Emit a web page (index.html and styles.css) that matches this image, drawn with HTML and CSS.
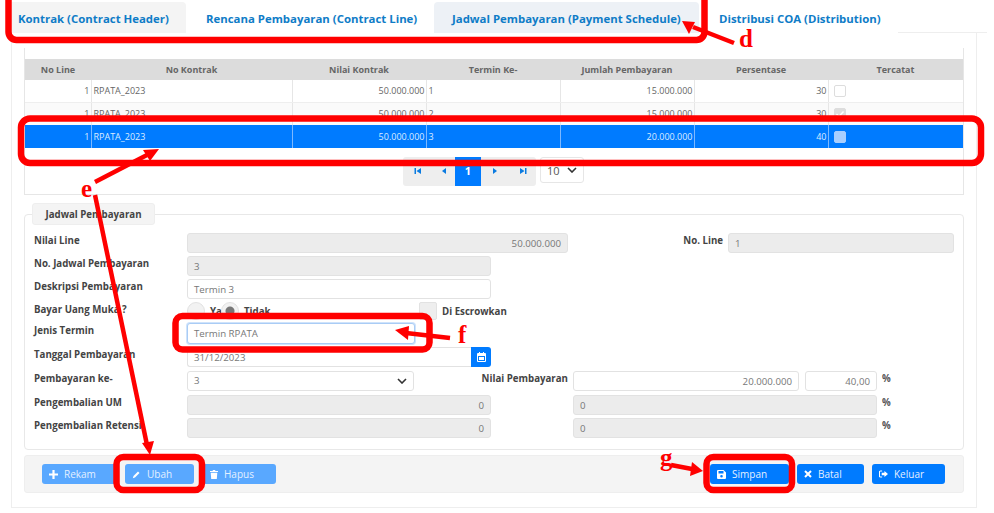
FILE: index.html
```html
<!DOCTYPE html>
<html lang="id">
<head>
  <meta charset="UTF-8" />
  <title>Jadwal Pembayaran</title>
  <link rel="stylesheet" href="styles.css">
</head>
<body>
  <div class="tabs">
    <a class="tab tab-grey">Kontrak (Contract Header)</a>
    <a class="tab tab-plain">Rencana Pembayaran (Contract Line)</a>
    <a class="tab tab-active">Jadwal Pembayaran (Payment Schedule)</a>
    <a class="tab tab-last">Distribusi COA (Distribution)</a>
  </div>

  <div class="panel">
    <div class="grid-box">
      <table class="grid">
        <colgroup>
          <col class="c1"><col class="c2"><col class="c3"><col class="c4"><col class="c5"><col class="c6"><col class="c7">
        </colgroup>
        <thead>
          <tr><th>No Line</th><th>No Kontrak</th><th>Nilai Kontrak</th><th>Termin Ke-</th><th>Jumlah Pembayaran</th><th>Persentase</th><th>Tercatat</th></tr>
        </thead>
        <tbody>
          <tr class="r1">
            <td class="num">1</td><td>RPATA_2023</td><td class="num">50.000.000</td><td>1</td><td class="num">15.000.000</td><td class="num">30</td><td><span class="check"></span></td>
          </tr>
          <tr class="r2">
            <td class="num">1</td><td>RPATA_2023</td><td class="num">50.000.000</td><td>2</td><td class="num">15.000.000</td><td class="num">30</td><td><span class="check checked"><svg width="10" height="10" viewBox="0 0 10 10"><path d="M1.500 5l2.500 2.500 4.500-5" fill="none" stroke="#fff" stroke-width="1.500"/></svg></span></td>
          </tr>
          <tr class="selected">
            <td class="num">1</td><td>RPATA_2023</td><td class="num">50.000.000</td><td>3</td><td class="num">20.000.000</td><td class="num">40</td><td><span class="check"></span></td>
          </tr>
        </tbody>
      </table>
      <div class="pager-row">
        <div class="pager">
          <span class="pg pg-a"><svg width="8" height="8" viewBox="0 0 8 8"><path d="M0.500 1h1.500v6H0.500zM7 1v6L2.500 4z"/></svg></span>
          <span class="pg pg-b"><svg width="8" height="8" viewBox="0 0 8 8"><path d="M6 1v6L2 4z"/></svg></span>
          <span class="pg pg-on">1</span>
          <span class="pg pg-c"><svg width="8" height="8" viewBox="0 0 8 8"><path d="M2 1v6l4-3z"/></svg></span>
          <span class="pg pg-d"><svg width="8" height="8" viewBox="0 0 8 8"><path d="M1 1v6l4.500-3zM6 1h1.500v6H6z"/></svg></span>
        </div>
        <div class="page-size">10
          <svg width="10" height="6" viewBox="0 0 10 6"><path d="M1 1l4 4 4-4" fill="none" stroke="#333" stroke-width="1.600"/></svg>
        </div>
      </div>
    </div>

    <div class="fieldset">
      <div class="legend">Jadwal Pembayaran</div>
      <div class="row">
        <label class="lbl">Nilai Line</label>
        <div class="inp off right w381">50.000.000</div>
        <label class="lbl-r w155">No. Line</label>
        <div class="inp off w226 ml5">1</div>
      </div>
      <div class="row">
        <label class="lbl">No. Jadwal Pembayaran</label>
        <div class="inp off w304">3</div>
      </div>
      <div class="row">
        <label class="lbl">Deskripsi Pembayaran</label>
        <div class="inp w304">Termin 3</div>
      </div>
      <div class="row row-radio">
        <label class="lbl">Bayar Uang Muka ?</label>
        <span class="radio"></span><span class="opt opt-ya">Ya</span>
        <span class="radio radio-on"></span><span class="opt opt-tidak">Tidak</span>
        <span class="box"></span><span class="opt">Di Escrowkan</span>
      </div>
      <div class="row row-jenis">
        <label class="lbl">Jenis Termin</label>
        <div class="inp focus w228">Termin RPATA</div>
      </div>
      <div class="row row-wide">
        <label class="lbl">Tanggal Pembayaran</label>
        <div class="date">
          <div class="inp date-inp">31/12/2023</div>
          <span class="date-btn"><svg width="9" height="10" viewBox="0 0 9 10"><path fill="#fff" d="M1 1h1V0h1v1h3V0h1v1h1a1 1 0 0 1 1 1v7a1 1 0 0 1-1 1H1a1 1 0 0 1-1-1V2a1 1 0 0 1 1-1zm0 3v5h7V4z"/><path fill="#fff" d="M2 5h5v3H2z"/></svg></span>
        </div>
      </div>
      <div class="row row-wide">
        <label class="lbl">Pembayaran ke-</label>
        <div class="inp w227 sel">3
          <svg width="10" height="6" viewBox="0 0 10 6"><path d="M1 1l4 4 4-4" fill="none" stroke="#333" stroke-width="1.600"/></svg>
        </div>
        <label class="lbl-r w154">Nilai Pembayaran</label>
        <div class="inp right w226 ml5">20.000.000</div>
        <div class="inp right w72 ml6">40,00</div>
        <span class="pct">%</span>
      </div>
      <div class="row">
        <label class="lbl">Pengembalian UM</label>
        <div class="inp off right w304">0</div>
        <div class="inp off w304 ml82">0</div>
        <span class="pct">%</span>
      </div>
      <div class="row">
        <label class="lbl">Pengembalian Retensi</label>
        <div class="inp off right w304">0</div>
        <div class="inp off w304 ml82">0</div>
        <span class="pct">%</span>
      </div>
    </div>

    <div class="actions">
      <button class="btn light b-rekam"><svg width="9" height="9" viewBox="0 0 9 9"><path fill="#fff" d="M3.400 0h2.200v3.400H9v2.200H5.600V9H3.400V5.600H0V3.400h3.400z"/></svg>Rekam</button>
      <button class="btn light b-ubah"><svg width="9" height="9" viewBox="0 0 9 9"><path fill="#fff" d="M6 1.500l1.500 1.500L3 7.500 0.800 8.200 1.500 6z"/></svg>Ubah</button>
      <button class="btn light b-hapus"><svg width="8" height="9" viewBox="0 0 8 9"><path fill="#fff" d="M3 0h2l.5 1H8v1H0V1h2.500zM.7 2.700h6.600L6.800 9H1.200z"/></svg>Hapus</button>
      <span class="spacer"></span>
      <button class="btn b-simpan"><svg width="9" height="9" viewBox="0 0 9 9"><path fill="#fff" d="M1 0h5.500L9 2.500V8a1 1 0 0 1-1 1H1a1 1 0 0 1-1-1V1a1 1 0 0 1 1-1zm.5 1v2.500h5V1zm3 4a1.300 1.300 0 1 0 0 2.600 1.300 1.300 0 0 0 0-2.600z"/></svg>Simpan</button>
      <button class="btn b-batal"><svg width="8" height="8" viewBox="0 0 8 8"><path fill="none" stroke="#fff" stroke-width="2" d="M1 1l6 6M7 1L1 7"/></svg>Batal</button>
      <button class="btn b-keluar"><svg width="9" height="8" viewBox="0 0 10 8"><path fill="none" stroke="#fff" stroke-width="1.200" d="M3.500.7H1.500a1 1 0 0 0-1 1v4.600a1 1 0 0 0 1 1h2"/><path fill="#fff" d="M6 .8L10 4 6 7.200V5.300H3V2.700h3z"/></svg>Keluar</button>
    </div>
  </div>

  <svg class="marks" width="994" height="513" viewBox="0 0 994 513">
    <g fill="none" stroke="#f00" stroke-width="6.500">
      <rect x="8.500" y="-12" width="696" height="52" rx="8"/>
      <rect x="21" y="118.500" width="960" height="44.500" rx="9"/>
      <rect x="175.500" y="316" width="254" height="33.500" rx="7"/>
      <rect x="116.500" y="457" width="85.500" height="33" rx="7"/>
      <rect x="706.500" y="457" width="85.500" height="33" rx="7"/>
    </g>
    <g stroke="#f00" stroke-width="4.500" fill="#f00">
      <line x1="734" y1="43" x2="693" y2="27"/>
      <path stroke="none" d="M682 21l13 1-6 12z"/>
      <line x1="95" y1="182" x2="147" y2="155"/>
      <path stroke="none" d="M159 149l-16 1 7 11z"/>
      <line x1="95" y1="195" x2="147" y2="445"/>
      <path stroke="none" d="M150 455l-8-12 12-2z"/>
      <line x1="450" y1="338" x2="406" y2="333"/>
      <path stroke="none" d="M395 330l14-4-1 14z"/>
      <line x1="671" y1="465" x2="692" y2="469"/>
      <path stroke="none" d="M703 471l-11-9-2 14z"/>
    </g>
    <g class="mark-text">
      <text x="739" y="47">d</text>
      <text x="81" y="197">e</text>
      <text x="458" y="343">f</text>
      <text x="660" y="466">g</text>
    </g>
  </svg>
</body>
</html>
```

FILE: styles.css
```css
* {
  box-sizing: border-box;
}
body {
  margin: 0;
  width: 994px;
  height: 513px;
  overflow: hidden;
  background: #fff;
  color: #555;
  font-family: "Open Sans", "Noto Sans", sans-serif;
  font-size: 9.700px;
  position: relative;
}

/* tabs */
.tabs {
  display: flex;
  height: 33px;
  padding: 2px 7px 0 6px;
}
.tab {
  height: 31px;
  line-height: 34px;
  font-size: 11.400px;
  font-weight: 700;
  color: #0f7cc7;
  border-radius: 4px 4px 0 0;
}
.tab-grey {
  width: 180px;
  padding-left: 12px;
  background: #f4f4f4;
}
.tab-plain {
  width: 248px;
  padding-left: 20px;
}
.tab-active {
  width: 265px;
  padding-left: 18px;
  background: #edf1f6;
}
.tab-last {
  width: 199px;
  padding-left: 20px;
}
.tabs:after {
  content: "";
  flex: 1;
  border-bottom: 1px solid #eee;
}

/* main panel */
.panel {
  margin-left: 11px;
  width: 966px;
  height: 475px;
  padding: 15px 12px 0 12px;
  border: 1px solid #eee;
  border-top: 0;
}
.grid-box {
  height: 147px;
  padding-top: 11px;
  border-bottom: 1px solid #e6e6e6;
  border-left: 1px solid #e6e6e6;
  border-right: 1px solid #e6e6e6;
  width: 940px;
}
.grid {
  width: 938px;
  table-layout: fixed;
  border-collapse: collapse;
  font-size: 9px;
}
.c1 { width: 66px; }
.c2 { width: 201px; }
.c3 { width: 134px; }
.c4 { width: 134px; }
.c5 { width: 134px; }
.c6 { width: 134px; }
.c7 { width: 135px; }
.grid th {
  height: 21px;
  padding: 0;
  background: #dcdcdc;
  color: #666;
  font-size: 9px;
  font-weight: 700;
}
.grid td {
  padding: 0 1px 0 2px;
  border-right: 1px solid #e6e6e6;
  color: #666;
}
.grid td:last-child {
  border-right: 0;
  padding-left: 5px;
}
.grid .num {
  text-align: right;
}
.r1 td {
  height: 22px;
  border-bottom: 1px solid #eee;
}
.r2 td {
  height: 23px;
  background: #fafafa;
}
.selected td {
  height: 23px;
  background: #007bff;
  color: #dcebff;
  border-right-color: #7db8ff;
}
.check {
  display: block;
  width: 12px;
  height: 12px;
  border: 1px solid #ddd;
  border-radius: 2px;
  background: #fff;
}
.check svg {
  display: block;
}
.checked {
  background: #ddd;
}
.selected .check {
  background: #a9cfff;
  border-color: #a9cfff;
}
.pager-row {
  display: flex;
  margin: 9px 0 0 378px;
  gap: 4px;
}
.pager {
  display: flex;
  height: 29px;
  width: 133px;
  background: #eee;
  border-radius: 3px;
}
.pg {
  flex: none;
  display: flex;
  align-items: center;
  justify-content: center;
  padding-bottom: 2px;
}
.pg svg {
  fill: #0b7be0;
}
.pg-a { width: 30px; }
.pg-b { width: 22px; }
.pg-c { width: 28px; }
.pg-d { width: 27px; }
.pg-on {
  width: 26px;
  background: #007bff;
  color: #fff;
  font-weight: 700;
  font-size: 11px;
}
.page-size {
  width: 44px;
  height: 26px;
  padding: 0 6px;
  display: flex;
  align-items: center;
  justify-content: space-between;
  border: 1px solid #e6e6e6;
  border-radius: 3px;
  font-size: 11px;
}

/* form */
.fieldset {
  position: relative;
  width: 940px;
  height: 236px;
  margin-top: 19px;
  padding: 18px 0 0 9px;
  border: 1px solid #e8e8e8;
  border-radius: 4px;
}
.legend {
  position: absolute;
  left: 7px;
  top: -12px;
  width: 123px;
  height: 22px;
  line-height: 22px;
  text-align: center;
  background: #f4f4f4;
  border: 1px solid #eee;
  border-radius: 3px;
  color: #444;
  font-weight: 700;
}
.row {
  display: flex;
  align-items: flex-start;
  height: 20px;
  margin-bottom: 3px;
}
.row-radio {
  height: 18px;
  margin-bottom: 3px;
}
.row-jenis {
  height: 21px;
}
.row-wide {
  margin-bottom: 4px;
}
.lbl {
  flex: none;
  width: 153px;
  line-height: 16px;
  font-weight: 700;
  color: #444;
}
.row-radio .lbl {
  line-height: 15px;
}
.lbl-r {
  flex: none;
  line-height: 16px;
  text-align: right;
  font-weight: 700;
  color: #444;
}
.inp {
  flex: none;
  height: 20px;
  line-height: 20px;
  padding: 0 6px;
  border: 1px solid #e2e2e2;
  border-radius: 3px;
  background: #fff;
  color: #777;
}
.off {
  background: #ececec;
}
.right {
  text-align: right;
}
.focus {
  height: 21px;
  border-color: #a9ccf5;
  box-shadow: 0 0 0 1px #cfe3fb;
}
.w72 { width: 72px; }
.w226 { width: 226px; }
.w227 { width: 227px; }
.w228 { width: 228px; }
.w304 { width: 304px; }
.w381 { width: 381px; }
.w154 { width: 154px; }
.w155 { width: 155px; }
.ml5 { margin-left: 5px; }
.ml6 { margin-left: 6px; }
.ml82 { margin-left: 82px; }
.sel {
  display: flex;
  align-items: center;
  justify-content: space-between;
}
.pct {
  margin-left: 5px;
  line-height: 16px;
  font-weight: 700;
  color: #555;
}
.date {
  display: flex;
  width: 304px;
}
.date-inp {
  flex: 1;
  border-right: 0;
  border-radius: 3px 0 0 3px;
}
.date-btn {
  display: flex;
  align-items: center;
  justify-content: center;
  width: 20px;
  height: 20px;
  background: #007bff;
  border-radius: 0 3px 3px 0;
}
.radio {
  flex: none;
  width: 18px;
  height: 18px;
  border: 1px solid #e2e2e2;
  border-radius: 50%;
  background: #f2f2f2;
}
.radio-on {
  background: radial-gradient(circle, #777 0 4px, #f2f2f2 5px);
}
.opt {
  margin-left: 5px;
  line-height: 20px;
  font-weight: 700;
  color: #444;
}
.opt-ya {
  width: 11px;
}
.opt-tidak {
  width: 175px;
}
.box {
  flex: none;
  width: 18px;
  height: 18px;
  background: #eee;
  border: 1px solid #e2e2e2;
  border-radius: 2px;
}

/* bottom buttons */
.actions {
  display: flex;
  width: 940px;
  height: 38px;
  margin-top: 5px;
  padding: 8px 18px 0 17px;
  background: #f4f4f4;
  border: 1px solid #eee;
  border-radius: 3px;
}
.spacer {
  flex: 1;
}
.btn {
  display: flex;
  align-items: center;
  gap: 6px;
  height: 20px;
  padding: 0 0 0 7px;
  border: 0;
  border-radius: 3px;
  background: #007bff;
  color: #e4f0ff;
  font-family: inherit;
  font-size: 10px;
}
.light {
  background: #59a8ff;
}
.b-rekam { width: 76px; }
.b-ubah { width: 69px; margin-left: 7px; }
.b-hapus { width: 73px; margin-left: 9px; }
.b-simpan { width: 79px; }
.b-batal { width: 67px; margin-left: 8px; }
.b-keluar { width: 73px; margin-left: 8px; }

/* red marks drawn over the screenshot */
.marks {
  position: absolute;
  left: 0;
  top: 0;
}
.mark-text {
  fill: #f00;
  font-family: "Liberation Serif", serif;
  font-size: 25px;
  font-weight: 700;
}
```
